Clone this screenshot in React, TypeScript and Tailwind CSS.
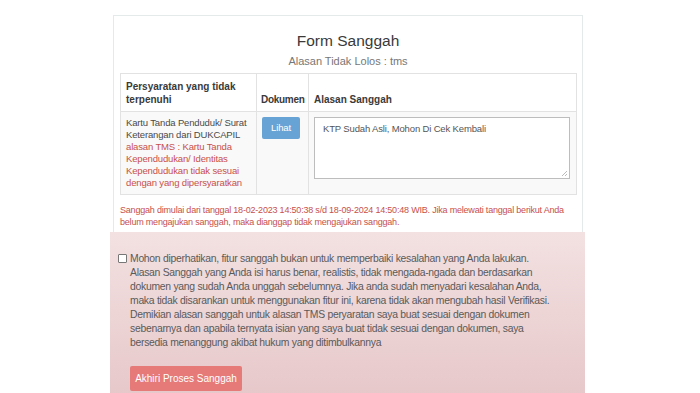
const requirement = {
  name: 'Kartu Tanda Penduduk/ Surat Keterangan dari DUKCAPIL',
  reason: 'alasan TMS : Kartu Tanda Kependudukan/ Identitas Kependudukan tidak sesuai dengan yang dipersyaratkan',
}

export default function App() {
  return (
    <div className="w-full h-[393px] bg-white overflow-hidden font-['Liberation_Sans',Arial,sans-serif] text-[#333]">
      <div className="ml-[113px] w-[470px] pt-[15px]">
        {/* card */}
        <div className="border border-b-0 border-[#e4e9e9] px-[6px] pt-[14px] pb-[4px]">
          <h1 className="text-center text-[15.5px] leading-[21px] text-[#3a3a3a]">Form Sanggah</h1>
          <p className="text-center text-[11px] leading-[15px] text-[#777] mt-[3px]">Alasan Tidak Lolos : tms</p>

          <table className="table-fixed w-[457px] mt-[4px] border-collapse border border-[#e2e2e2] text-[9.5px] tracking-[-0.15px]">
            <colgroup>
              <col className="w-[136px]" />
              <col className="w-[52px]" />
              <col />
            </colgroup>
            <thead>
              <tr className="bg-white">
                <th className="border border-[#e2e2e2] px-[5px] pt-[6px] pb-[5px] text-left align-bottom font-bold leading-[13px] text-[10px] text-[#3a3a3a] tracking-normal">
                  Persyaratan yang tidak terpenuhi
                </th>
                <th className="border border-[#e2e2e2] px-[4px] pt-[6px] pb-[5px] text-left align-bottom font-bold leading-[13px] text-[10px] text-[#3a3a3a] tracking-[-0.3px]">
                  Dokumen
                </th>
                <th className="border border-[#e2e2e2] px-[5px] pt-[6px] pb-[5px] text-left align-bottom font-bold leading-[13px] text-[10px] text-[#3a3a3a] tracking-normal">
                  Alasan Sanggah
                </th>
              </tr>
            </thead>
            <tbody>
              <tr className="bg-[#f9f9f9]">
                <td className="border border-[#e2e2e2] pl-[5px] pr-[4px] pt-[5px] pb-[5px] align-top leading-[12px] text-[#4a4a4a]">
                  {requirement.name}
                  <span className="block text-[#c8504b]">{requirement.reason}</span>
                </td>
                <td className="border border-[#e2e2e2] px-[5px] pt-[5px] pb-[5px] align-top">
                  <button className="w-[38px] h-[22px] bg-[#68a3d6] text-white text-[9.5px] rounded-[2px]">Lihat</button>
                </td>
                <td className="border border-[#e2e2e2] pl-[5px] pr-[8px] pt-[5px] pb-[5px] align-top">
                  <div className="relative w-[256px] h-[62px] bg-white border border-[#bdbdbd] px-[8px] pt-[4px] text-[9.5px] leading-[14px] text-[#555]">
                    KTP Sudah Asli, Mohon Di Cek Kembali
                    <svg className="absolute right-[2px] bottom-[2px]" width="6" height="6" viewBox="0 0 6 6">
                      <path d="M1 6 L6 1 M4 6 L6 4" stroke="#aaa" strokeWidth="0.8" />
                    </svg>
                  </div>
                </td>
              </tr>
            </tbody>
          </table>

          <p className="mt-[9px] text-[9px] tracking-[-0.2px] leading-[12px] text-[#c8504b] pr-[4px]">
            Sanggah dimulai dari tanggal 18-02-2023 14:50:38 s/d 18-09-2024 14:50:48 WIB. Jika melewati tanggal berikut Anda belum mengajukan sanggah, maka dianggap tidak mengajukan sanggah.
          </p>
        </div>

        {/* warning panel */}
        <div className="-ml-[3px] w-[475px] h-[170px] bg-gradient-to-b from-[#f3e1e1] to-[#e6c7c9] pl-[8px] pt-[20px]">
          <div className="flex items-start gap-[3px]">
            <span className="mt-[2px] w-[9px] h-[9px] shrink-0 border border-[#777] bg-white rounded-[1px]" />
            <p className="w-[428px] text-[10.4px] tracking-[-0.28px] leading-[14px] text-[#5a5a5a]">
              Mohon diperhatikan, fitur sanggah bukan untuk memperbaiki kesalahan yang Anda lakukan. Alasan Sanggah yang Anda isi harus benar, realistis, tidak mengada-ngada dan berdasarkan dokumen yang sudah Anda unggah sebelumnya. Jika anda sudah menyadari kesalahan Anda, maka tidak disarankan untuk menggunakan fitur ini, karena tidak akan mengubah hasil Verifikasi. Demikian alasan sanggah untuk alasan TMS peryaratan saya buat sesuai dengan dokumen sebenarnya dan apabila ternyata isian yang saya buat tidak sesuai dengan dokumen, saya bersedia menanggung akibat hukum yang ditimbulkannya
            </p>
          </div>
          <button className="ml-[12px] mt-[16px] w-[112px] h-[25px] bg-[#e57a78] text-white text-[10px] rounded-[2px]">
            Akhiri Proses Sanggah
          </button>
        </div>
      </div>
    </div>
  )
}
